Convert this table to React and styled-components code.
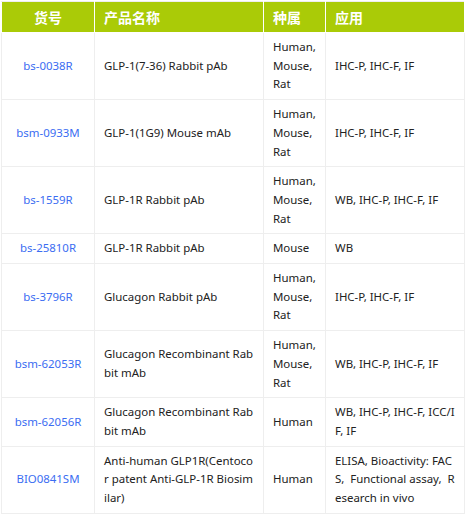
import styled, { createGlobalStyle } from 'styled-components'

const GlobalStyle = createGlobalStyle`
  body {
    margin: 0;
    padding: 1px;
    background: #fff;
    font-family: "Noto Sans", "Noto Sans CJK SC", sans-serif;
  }
`

const products = [
  { id: 'bs-0038R', name: 'GLP-1(7-36) Rabbit pAb', species: 'Human, Mouse, Rat', app: 'IHC-P, IHC-F, IF' },
  { id: 'bsm-0933M', name: 'GLP-1(1G9) Mouse mAb', species: 'Human, Mouse, Rat', app: 'IHC-P, IHC-F, IF' },
  { id: 'bs-1559R', name: 'GLP-1R Rabbit pAb', species: 'Human, Mouse, Rat', app: 'WB, IHC-P, IHC-F, IF' },
  { id: 'bs-25810R', name: 'GLP-1R Rabbit pAb', species: 'Mouse', app: 'WB' },
  { id: 'bs-3796R', name: 'Glucagon Rabbit pAb', species: 'Human, Mouse, Rat', app: 'IHC-P, IHC-F, IF' },
  { id: 'bsm-62053R', name: 'Glucagon Recombinant Rabbit mAb', species: 'Human, Mouse, Rat', app: 'WB, IHC-P, IHC-F, IF' },
  { id: 'bsm-62056R', name: 'Glucagon Recombinant Rabbit mAb', species: 'Human', app: 'WB, IHC-P, IHC-F, ICC/IF, IF' },
  { id: 'BIO0841SM', name: 'Anti-human GLP1R(Centocor patent Anti-GLP-1R Biosimilar)', species: 'Human', app: 'ELISA, Bioactivity: FACS,\u00a0 Functional assay,\u00a0 Research in vivo' },
]

const App = () => {
  return (
    <>
      <GlobalStyle />
      <Table>
        <colgroup>
          <col style={{ width: 93 }} />
          <col style={{ width: 169 }} />
          <col style={{ width: 62 }} />
          <col style={{ width: 139 }} />
        </colgroup>
        <thead>
          <tr>
            <Th $center>货号</Th>
            <Th>产品名称</Th>
            <Th>种属</Th>
            <Th>应用</Th>
          </tr>
        </thead>
        <tbody>
          {products.map((p) => (
            <tr key={p.id}>
              <Td $center><Link href='#'>{p.id}</Link></Td>
              <Td $breakAll>{p.name}</Td>
              <Td>{p.species}</Td>
              <Td $breakAll>{p.app}</Td>
            </tr>
          ))}
        </tbody>
      </Table>
    </>
  )
}

export default App

const Table = styled.table`
  width: 463px;
  table-layout: fixed;
  border-collapse: collapse;
  border: 1px solid #eeeeee;
`

const Th = styled.th`
  background-color: #aacb07;
  color: #fff;
  font-family: "Noto Sans CJK SC", sans-serif;
  font-size: 14px;
  font-weight: 700;
  text-align: ${({ $center }) => ($center ? 'center' : 'left')};
  padding: 6px 9px 5px;
  line-height: 19px;
  border: 1px solid #fff;
  border-top-color: #eeeeee;
`

const Td = styled.td`
  font-size: 11.45px;
  line-height: 18.7px;
  color: #222;
  padding: 5px 9px;
  border: 1px solid #eeeeee;
  vertical-align: middle;
  text-align: ${({ $center }) => ($center ? 'center' : 'left')};
  word-break: ${({ $breakAll }) => ($breakAll ? 'break-all' : 'normal')};
`

const Link = styled.a`
  color: #3b6df2;
  text-decoration: none;
`
